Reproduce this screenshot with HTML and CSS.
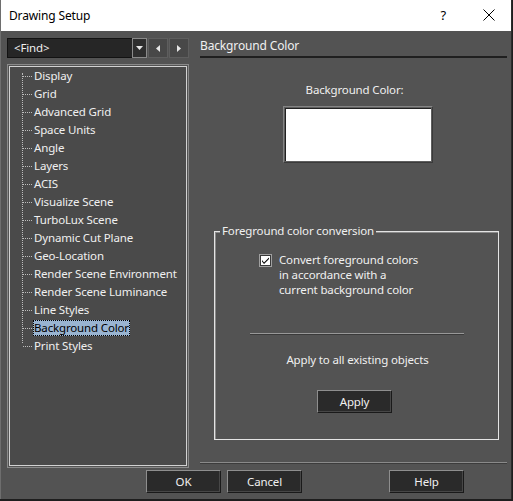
FILE: index.html
```html
<!DOCTYPE html>
<html>
<head>
<meta charset="utf-8">
<link rel="stylesheet" href="styles.css">
</head>
<body>
<div class="window">
  <div class="titlebar">
    <span class="title">Drawing Setup</span>
    <span class="help-q">?</span>
    <span class="close"><svg width="12" height="12" viewBox="0 0 12 12"><path d="M0.5 0.5 L11.5 11.5 M11.5 0.5 L0.5 11.5" stroke="#000" stroke-width="1" fill="none"/></svg></span>
  </div>
  <div class="client">
    <div class="main">
      <div class="leftcol">
        <div class="findrow">
          <div class="combo">
            <div class="combo-field">&lt;Find&gt;</div>
            <div class="combo-btn"><svg width="7" height="4" viewBox="0 0 7 4"><path d="M0 0 H7 L3.5 4 Z" fill="#e8e8e8"/></svg></div>
          </div>
          <div class="navbtn"><svg width="4" height="7" viewBox="0 0 4 7"><path d="M4 0 V7 L0 3.5 Z" fill="#e8e8e8"/></svg></div>
          <div class="navbtn"><svg width="4" height="7" viewBox="0 0 4 7"><path d="M0 0 V7 L4 3.5 Z" fill="#e8e8e8"/></svg></div>
        </div>
        <div class="tree">
          <div class="tree-inner">
            <div class="vline"></div>
            <div class="node"><span class="hdots"></span><span class="label">Display</span></div>
            <div class="node"><span class="hdots"></span><span class="label">Grid</span></div>
            <div class="node"><span class="hdots"></span><span class="label">Advanced Grid</span></div>
            <div class="node"><span class="hdots"></span><span class="label">Space Units</span></div>
            <div class="node"><span class="hdots"></span><span class="label">Angle</span></div>
            <div class="node"><span class="hdots"></span><span class="label">Layers</span></div>
            <div class="node"><span class="hdots"></span><span class="label">ACIS</span></div>
            <div class="node"><span class="hdots"></span><span class="label">Visualize Scene</span></div>
            <div class="node"><span class="hdots"></span><span class="label">TurboLux Scene</span></div>
            <div class="node"><span class="hdots"></span><span class="label">Dynamic Cut Plane</span></div>
            <div class="node"><span class="hdots"></span><span class="label">Geo-Location</span></div>
            <div class="node"><span class="hdots"></span><span class="label">Render Scene Environment</span></div>
            <div class="node"><span class="hdots"></span><span class="label">Render Scene Luminance</span></div>
            <div class="node"><span class="hdots"></span><span class="label">Line Styles</span></div>
            <div class="node"><span class="hdots"></span><span class="label selected">Background Color</span></div>
            <div class="node last"><span class="hdots"></span><span class="label">Print Styles</span></div>
          </div>
        </div>
      </div>
      <div class="rightcol">
        <div class="page-header">Background Color</div>
        <div class="bg-label">Background Color:</div>
        <div class="swatch"><div class="swatch-inner"></div></div>
        <div class="group">
          <div class="group-title">Foreground color conversion</div>
          <div class="check-row">
            <span class="checkbox"><svg width="13" height="13" viewBox="0 0 13 13"><rect x="0.5" y="0.5" width="12" height="12" fill="#fff" stroke="#a0a0a0"/><rect x="1.5" y="1.5" width="10" height="10" fill="#fff" stroke="#3a3a3a"/><path d="M3 6 L5 8.5 L10 3.5 L10 5 L5 10 L3 7.5 Z" fill="#000"/></svg></span>
            <span class="check-text">Convert foreground colors<br>in accordance with a<br>current background color</span>
          </div>
          <div class="sep"></div>
          <div class="apply-text">Apply to all existing objects</div>
          <div class="apply-row"><div class="btn">Apply</div></div>
        </div>
        <div class="bottom-sep"></div>
      </div>
    </div>
    <div class="footer">
      <div class="btn ok">OK</div>
      <div class="btn cancel">Cancel</div>
      <div class="btn help">Help</div>
    </div>
  </div>
</div>
</body>
</html>
```

FILE: styles.css
```css
html, body {
  margin: 0;
  padding: 0;
}
body {
  background: #1e1e1e;
  width: 513px;
  height: 501px;
  overflow: hidden;
  font-family: "Noto Sans", "Open Sans", sans-serif;
  font-size: 11.5px;
  letter-spacing: -0.15px;
  color: #f0f0f0;
}
.window {
  width: 510px;
  height: 499px;
  border-left: 1px solid #6e6e6e;
  border-right: 1px solid #2c2c2c;
  background: #535353;
  display: flex;
  flex-direction: column;
}
.titlebar {
  height: 31px;
  background: #ffffff;
  color: #000;
  display: flex;
  align-items: center;
  flex-shrink: 0;
}
.title {
  margin-left: 8px;
  font-size: 12px;
  margin-top: -1px;
}
.help-q {
  margin-left: auto;
  font-size: 13px;
  margin-right: 37px;
  margin-top: -1px;
}
.close {
  display: flex;
  margin-right: 16px;
  margin-top: -1px;
}
.client {
  padding: 7px 0 0 6px;
  display: flex;
  flex-direction: column;
}
.main {
  display: flex;
  gap: 11px;
  height: 430px;
}
.leftcol {
  width: 182px;
  display: flex;
  flex-direction: column;
  gap: 6px;
}
.findrow {
  display: flex;
  height: 20px;
  gap: 1px;
}
.combo {
  display: flex;
  width: 140px;
}
.combo-field {
  height: 18px;
  background: #262626;
  border: 1px solid #121212;
  border-right: none;
  line-height: 18px;
  padding-left: 6px;
  box-sizing: content-box;
  width: 119px;
}
.combo-btn {
  width: 13px;
  height: 18px;
  border: 1px solid #8a8a8a;
  background: #2e2e2e;
  display: flex;
  align-items: center;
  justify-content: center;
}
.navbtn {
  width: 18px;
  height: 18px;
  border: 1px solid #5e5e5e;
  background: #484848;
  display: flex;
  align-items: center;
  justify-content: center;
}
.tree {
  height: 404px;
  box-sizing: border-box;
  border: 1px solid #8a8a8a;
  padding: 1px;
}
.tree-inner {
  height: 100%;
  box-sizing: border-box;
  border: 1px solid #d2d2d2;
  background: #4a4a4a;
  position: relative;
}
.vline {
  position: absolute;
  left: 12px;
  top: 6px;
  height: 270px;
  border-left: 1px dotted #bdbdbd;
}
.node {
  height: 18px;
  display: flex;
  align-items: center;
}
.hdots {
  width: 9px;
  margin-left: 13px;
  border-top: 1px dotted #bdbdbd;
  margin-right: 1px;
  flex-shrink: 0;
}
.label {
  padding: 0 1px;
  line-height: 16px;
  white-space: nowrap;
}
.label.selected {
  background: #99b4d1;
  color: #000;
  outline: 1px dotted #000;
  outline-offset: -1px;
}
.rightcol {
  width: 307px;
  display: flex;
  flex-direction: column;
}
.page-header {
  height: 18px;
  line-height: 16px;
  border-bottom: 2px solid #1f1f1f;
  font-size: 12px;
}
.bg-label {
  margin-top: 24px;
  line-height: 16px;
  text-align: center;
  padding-left: 2px;
}
.swatch {
  margin-top: 8px;
  margin-left: 83px;
  width: 150px;
  height: 57px;
  box-sizing: border-box;
  border: 1px solid;
  border-color: #858585 #3a3a3a #3a3a3a #858585;
  padding: 1px;
  background: #5e5e5e;
}
.swatch-inner {
  height: 100%;
  box-sizing: border-box;
  background: #fff;
  border-top: 1px solid #222;
  border-left: 1px solid #222;
}
.group {
  margin-top: 68px;
  margin-left: 14px;
  width: 285px;
  height: 209px;
  box-sizing: border-box;
  border: 1px solid #e4e4e4;
  box-shadow: inset 1px 1px 0 #8a8a8a;
  position: relative;
  display: flex;
  flex-direction: column;
}
.group-title {
  position: absolute;
  top: -9px;
  left: 5px;
  padding: 0 2px 0 2px;
  background: #535353;
  line-height: 16px;
}
.check-row {
  display: flex;
  margin-top: 20px;
  margin-left: 44px;
}
.checkbox {
  display: flex;
  margin-top: 2px;
  margin-right: 7px;
}
.check-text {
  line-height: 15px;
}
.sep {
  margin-top: 36px;
  margin-left: 35px;
  width: 214px;
  border-top: 1px solid #989898;
  border-bottom: 1px solid #3a3a3a;
}
.apply-text {
  margin-top: 17px;
  line-height: 16px;
  text-align: center;
  padding-left: 2px;
}
.apply-row {
  margin-top: 22px;
  display: flex;
  padding-left: 102px;
}
.btn {
  width: 75px;
  height: 23px;
  box-sizing: border-box;
  background: #2a2a2a;
  border: 1px solid;
  border-color: #8e8e8e #1a1a1a #1a1a1a #8e8e8e;
  box-shadow: inset -1px -1px 0 #474747;
  display: flex;
  align-items: center;
  justify-content: center;
  line-height: 16px;
}
.bottom-sep {
  margin-top: 22px;
  border-top: 1px solid #8a8a8a;
  border-bottom: 1px solid #3c3c3c;
}
.footer {
  display: flex;
  margin-top: 2px;
  padding-left: 139px;
}
.btn.cancel {
  margin-left: 6px;
}
.btn.help {
  margin-left: 87px;
}
```
